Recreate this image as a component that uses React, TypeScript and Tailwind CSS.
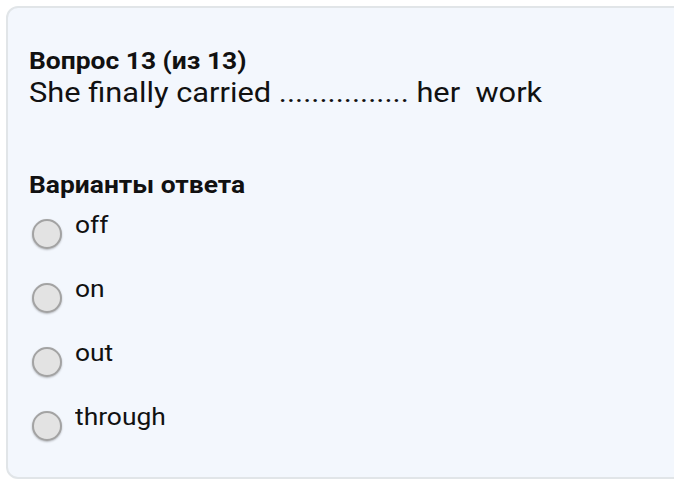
export default function App() {
  const options = ["off", "on", "out", "through"];
  return (
    <div className="w-[674px] h-[481px] overflow-hidden bg-white pl-[6px] pt-[6px]" style={{ fontFamily: "Roboto, sans-serif" }}>
      <div className="w-[720px] h-[473px] rounded-[12px] border-2 border-[#e1e5e8] bg-[#f3f7fd] pl-[21px] pt-[39px] text-[#111]">
        <div className="origin-left scale-x-[1.1] text-[24px] font-bold leading-[29px]">Вопрос 13 (из 13)</div>
        <div className="origin-left scale-x-[1.1] text-[28px] leading-[34px]">She finally carried ................ her&nbsp; work</div>
        <div className="mt-[61px] origin-left scale-x-[1.1] text-[24px] font-bold leading-[28px]">Варианты ответа</div>
        <div className="mt-[12px] flex flex-col">
          {options.map((o) => (
            <div key={o} className="flex h-[64px] items-start">
              <div className="mt-[8px] ml-[3px] h-[30px] w-[30px] shrink-0 rounded-full border-2 border-[#a3a3a3] bg-[#e3e3e3] shadow-[0_1px_2px_rgba(0,0,0,0.25)]" />
              <div className="ml-[13px] origin-left scale-x-[1.1] text-[24px] leading-[28px]">{o}</div>
            </div>
          ))}
        </div>
      </div>
    </div>
  );
}
